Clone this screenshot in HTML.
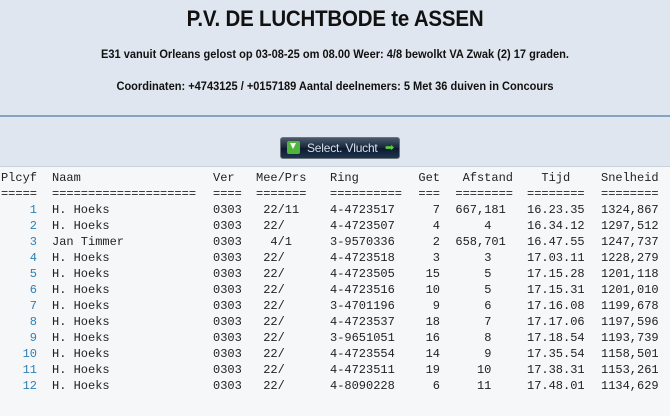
<!DOCTYPE html>
<html><head><meta charset="utf-8"><style>
body{margin:0;width:670px;height:415px;overflow:hidden;background:#dfe6ef;font-family:"Liberation Sans",sans-serif;position:relative}
.t{position:absolute;left:0;width:670px;text-align:center;font-weight:bold;color:#111}
.h1{top:6px;font-size:22px;transform:scaleX(.93);letter-spacing:-.2px}
.l{font-size:11.5px;transform:scaleX(.96)}
.rule{position:absolute;left:0;width:670px;top:115px;height:2px;background:#86a4c2}
.tab{position:absolute;left:0;top:166px;width:670px;height:249px;background:#f6f7f9;border-top:1px solid #c9d3de}
.btn{position:absolute;left:280px;top:137px;width:118px;height:20px;border:1px solid #6d737a;border-radius:3px;background:linear-gradient(#4a5a6c,#16243a 50%,#0c1a2e 51%,#1e3550);color:#d8e0ea;font-size:12px;line-height:20px}
.btn .ic{position:absolute;left:6px;top:3px;width:13px;height:13px;background:#4fb53a;border-radius:2px}
.btn .ic:after{content:"";position:absolute;left:3px;top:2px;border-left:3.5px solid transparent;border-right:3.5px solid transparent;border-top:6px solid #fff}
.btn .tx{position:absolute;left:26px;top:0;letter-spacing:-.2px}
.btn .ar{position:absolute;left:104px;top:0;color:#5bd03a;font-size:11px}
pre{position:absolute;top:170px;margin:0;font-family:"Liberation Mono",monospace;font-size:12px;line-height:16px;color:#222}
.r{text-align:right}
b{font-weight:normal;color:#2f7fb5}
</style></head><body>
<div class="t h1">P.V. DE LUCHTBODE te ASSEN</div>
<div class="t l" style="top:49px">E31 vanuit Orleans gelost op 03-08-25 om 08.00 Weer: 4/8 bewolkt VA Zwak (2) 17 graden.</div>
<div class="t l" style="top:81px">Coordinaten: +4743125 / +0157189 Aantal deelnemers: 5 Met 36 duiven in Concours</div>
<div class="rule"></div>
<div class="btn"><span class="ic"></span><span class="tx">Select. Vlucht</span><span class="ar">➡</span></div>
<div class="tab"></div>
<pre class="r" style="left:0;width:37px">Plcyf
=====
<b>1
2
3
4
5
6
7
8
9
10
11
12</b></pre>
<pre style="left:52px">Naam
====================
H. Hoeks
H. Hoeks
Jan Timmer
H. Hoeks
H. Hoeks
H. Hoeks
H. Hoeks
H. Hoeks
H. Hoeks
H. Hoeks
H. Hoeks
H. Hoeks</pre>
<pre style="left:213px">Ver
====
0303
0303
0303
0303
0303
0303
0303
0303
0303
0303
0303
0303</pre>
<pre style="left:256px">Mee/Prs
=======
 22/11
 22/
  4/1
 22/
 22/
 22/
 22/
 22/
 22/
 22/
 22/
 22/</pre>
<pre style="left:330px">Ring
==========
4-4723517
4-4723507
3-9570336
4-4723518
4-4723505
4-4723516
3-4701196
4-4723537
3-9651051
4-4723554
4-4723511
4-8090228</pre>
<pre class="r" style="left:418px;width:22px">Get
===
7
4
2
3
15
10
9
18
16
14
19
6</pre>
<pre class="r" style="left:455px;width:58px">Afstand
========
667,181 
4   
658,701 
3   
5   
5   
6   
7   
8   
9   
10   
11   </pre>
<pre style="left:527px">  Tijd
========
16.23.35
16.34.12
16.47.55
17.03.11
17.15.28
17.15.31
17.16.08
17.17.06
17.18.54
17.35.54
17.38.31
17.48.01</pre>
<pre style="left:601px">Snelheid
========
1324,867
1297,512
1247,737
1228,279
1201,118
1201,010
1199,678
1197,596
1193,739
1158,501
1153,261
1134,629</pre>
</body></html>
